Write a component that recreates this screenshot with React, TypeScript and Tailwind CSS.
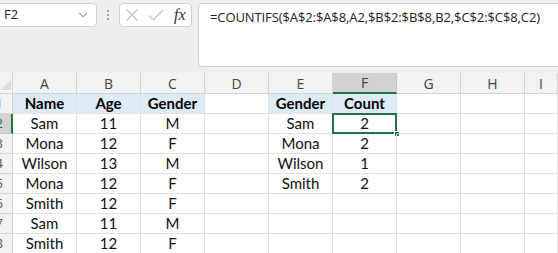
import { ChevronDown } from "lucide-react";

const cols = ["A", "B", "C", "D", "E", "F", "G", "H", "I"];

type Cell = { text?: string; bold?: boolean; fill?: boolean; selected?: boolean };

const rows: Cell[][] = [
  [
    { text: "Name", bold: true, fill: true },
    { text: "Age", bold: true, fill: true },
    { text: "Gender", bold: true, fill: true },
    {},
    { text: "Gender", bold: true, fill: true },
    { text: "Count", bold: true, fill: true },
  ],
  [{ text: "Sam" }, { text: "11" }, { text: "M" }, {}, { text: "Sam" }, { text: "2", selected: true }],
  [{ text: "Mona" }, { text: "12" }, { text: "F" }, {}, { text: "Mona" }, { text: "2" }],
  [{ text: "Wilson" }, { text: "13" }, { text: "M" }, {}, { text: "Wilson" }, { text: "1" }],
  [{ text: "Mona" }, { text: "12" }, { text: "F" }, {}, { text: "Smith" }, { text: "2" }],
  [{ text: "Smith" }, { text: "12" }, { text: "F" }],
  [{ text: "Sam" }, { text: "11" }, { text: "M" }],
  [{ text: "Smith" }, { text: "12" }, { text: "F" }],
];

export default function App() {
  return (
    <div
      className="w-[558px] h-[253px] overflow-hidden bg-[#efefef] text-[#222]"
      style={{ fontFamily: "'Open Sans', 'Noto Sans', sans-serif" }}
    >
      {/* Formula bar */}
      <div className="flex items-start h-[73px] pt-[3px]">
        <div className="ml-[-6px] w-[103px] h-[24px] bg-white border border-[#d1d1d1] rounded-[4px] flex items-center pl-[9px] pr-[6px]">
          <span className="text-[13px] flex-1">F2</span>
          <ChevronDown size={14} strokeWidth={1.5} className="text-[#555]" />
        </div>
        <div className="w-[22px] h-[24px] flex flex-col items-center justify-center gap-[2px]">
          <span className="w-[2px] h-[2px] bg-[#888] rounded-full" />
          <span className="w-[2px] h-[2px] bg-[#888] rounded-full" />
          <span className="w-[2px] h-[2px] bg-[#888] rounded-full" />
        </div>
        <div className="w-[73px] h-[24px] bg-white border border-[#d1d1d1] rounded-[4px] flex items-center pl-[5px] gap-[9px]">
          <svg width="14" height="14" viewBox="0 0 14 14" fill="none">
            <path d="M1.5 1.5l11 11M12.5 1.5l-11 11" stroke="#c3c3c3" strokeWidth="1.2" />
          </svg>
          <svg width="16" height="14" viewBox="0 0 16 14" fill="none">
            <path d="M1 7.5l4.5 4.5L15 2" stroke="#c3c3c3" strokeWidth="1.2" />
          </svg>
          <span
            className="text-[16px] italic text-[#333] leading-none ml-[1px]"
            style={{ fontFamily: "'Liberation Serif', serif" }}
          >
            fx
          </span>
        </div>
        <div className="ml-[6px] flex-1 mr-[-10px] h-[64px] bg-white border border-[#d1d1d1] rounded-[4px] pl-[11px] pt-[4px] text-[13px] leading-[18px] tracking-[-0.1px]">
          =COUNTIFS($A$2:$A$8,A2,$B$2:$B$8,B2,$C$2:$C$8,C2)
        </div>
      </div>

      {/* Grid */}
      <div className="grid grid-cols-[13px_repeat(8,64px)_1fr] bg-white">
        {/* column headers */}
        <div className="h-[21px] bg-[#f3f3f3] border-r border-b border-[#d4d4d4] relative overflow-hidden">
          <div className="absolute right-[1px] bottom-[3px] w-0 h-0 border-l-[10px] border-l-transparent border-b-[10px] border-b-[#dcdcdc]" />
        </div>
        {cols.map((c) => (
          <div
            key={c}
            className={
              c === "F"
                ? "h-[21px] bg-[#d2d2d2] border-r border-[#c6c6c6] border-b-2 border-b-[#217346] flex items-center justify-center text-[14px] text-[#444]"
                : "h-[21px] bg-[#f3f3f3] border-r border-b border-[#d4d4d4] flex items-center justify-center text-[14px] text-[#444]"
            }
          >
            {c}
          </div>
        ))}

        {rows.map((row, r) => (
          <Row key={r} index={r + 1} cells={row} />
        ))}
      </div>
    </div>
  );
}

function Row({ index, cells }: { index: number; cells: Cell[] }) {
  const filled = Array.from({ length: 9 }, (_, i) => cells[i] ?? {});
  return (
    <>
      <div
        className={
          index === 2
            ? "h-[20px] bg-[#d2d2d2] border-r-2 border-r-[#217346] border-b border-b-[#c6c6c6] overflow-hidden flex items-center justify-end"
            : "h-[20px] bg-[#f3f3f3] border-r border-b border-[#d4d4d4] overflow-hidden flex items-center justify-end"
        }
      >
        <span
          className={
            index === 2
              ? "text-[13px] text-[#217346] mr-[8px] leading-none"
              : "text-[13px] text-[#555] mr-[9px] leading-none"
          }
        >
          {index}
        </span>
      </div>
      {filled.map((cell, i) => (
        <div
          key={i}
          className={
            "h-[20px] border-r border-b border-[#e1e1e1] flex items-center justify-center text-[15px] leading-none relative " +
            (cell.fill ? "bg-[#ddebf7] " : "") +
            (cell.bold ? "font-bold text-black" : "text-[#111]")
          }
          style={{ fontFamily: "'Lato', 'Open Sans', sans-serif" }}
        >
          {cell.text}
          {cell.selected && (
            <>
              <div className="absolute left-[-1px] top-[-1px] right-[-1px] bottom-[-1px] border-2 border-[#217346]" />
              <div className="absolute right-[-4px] bottom-[-4px] w-[6px] h-[6px] bg-[#217346] border border-white" />
            </>
          )}
        </div>
      ))}
    </>
  );
}
